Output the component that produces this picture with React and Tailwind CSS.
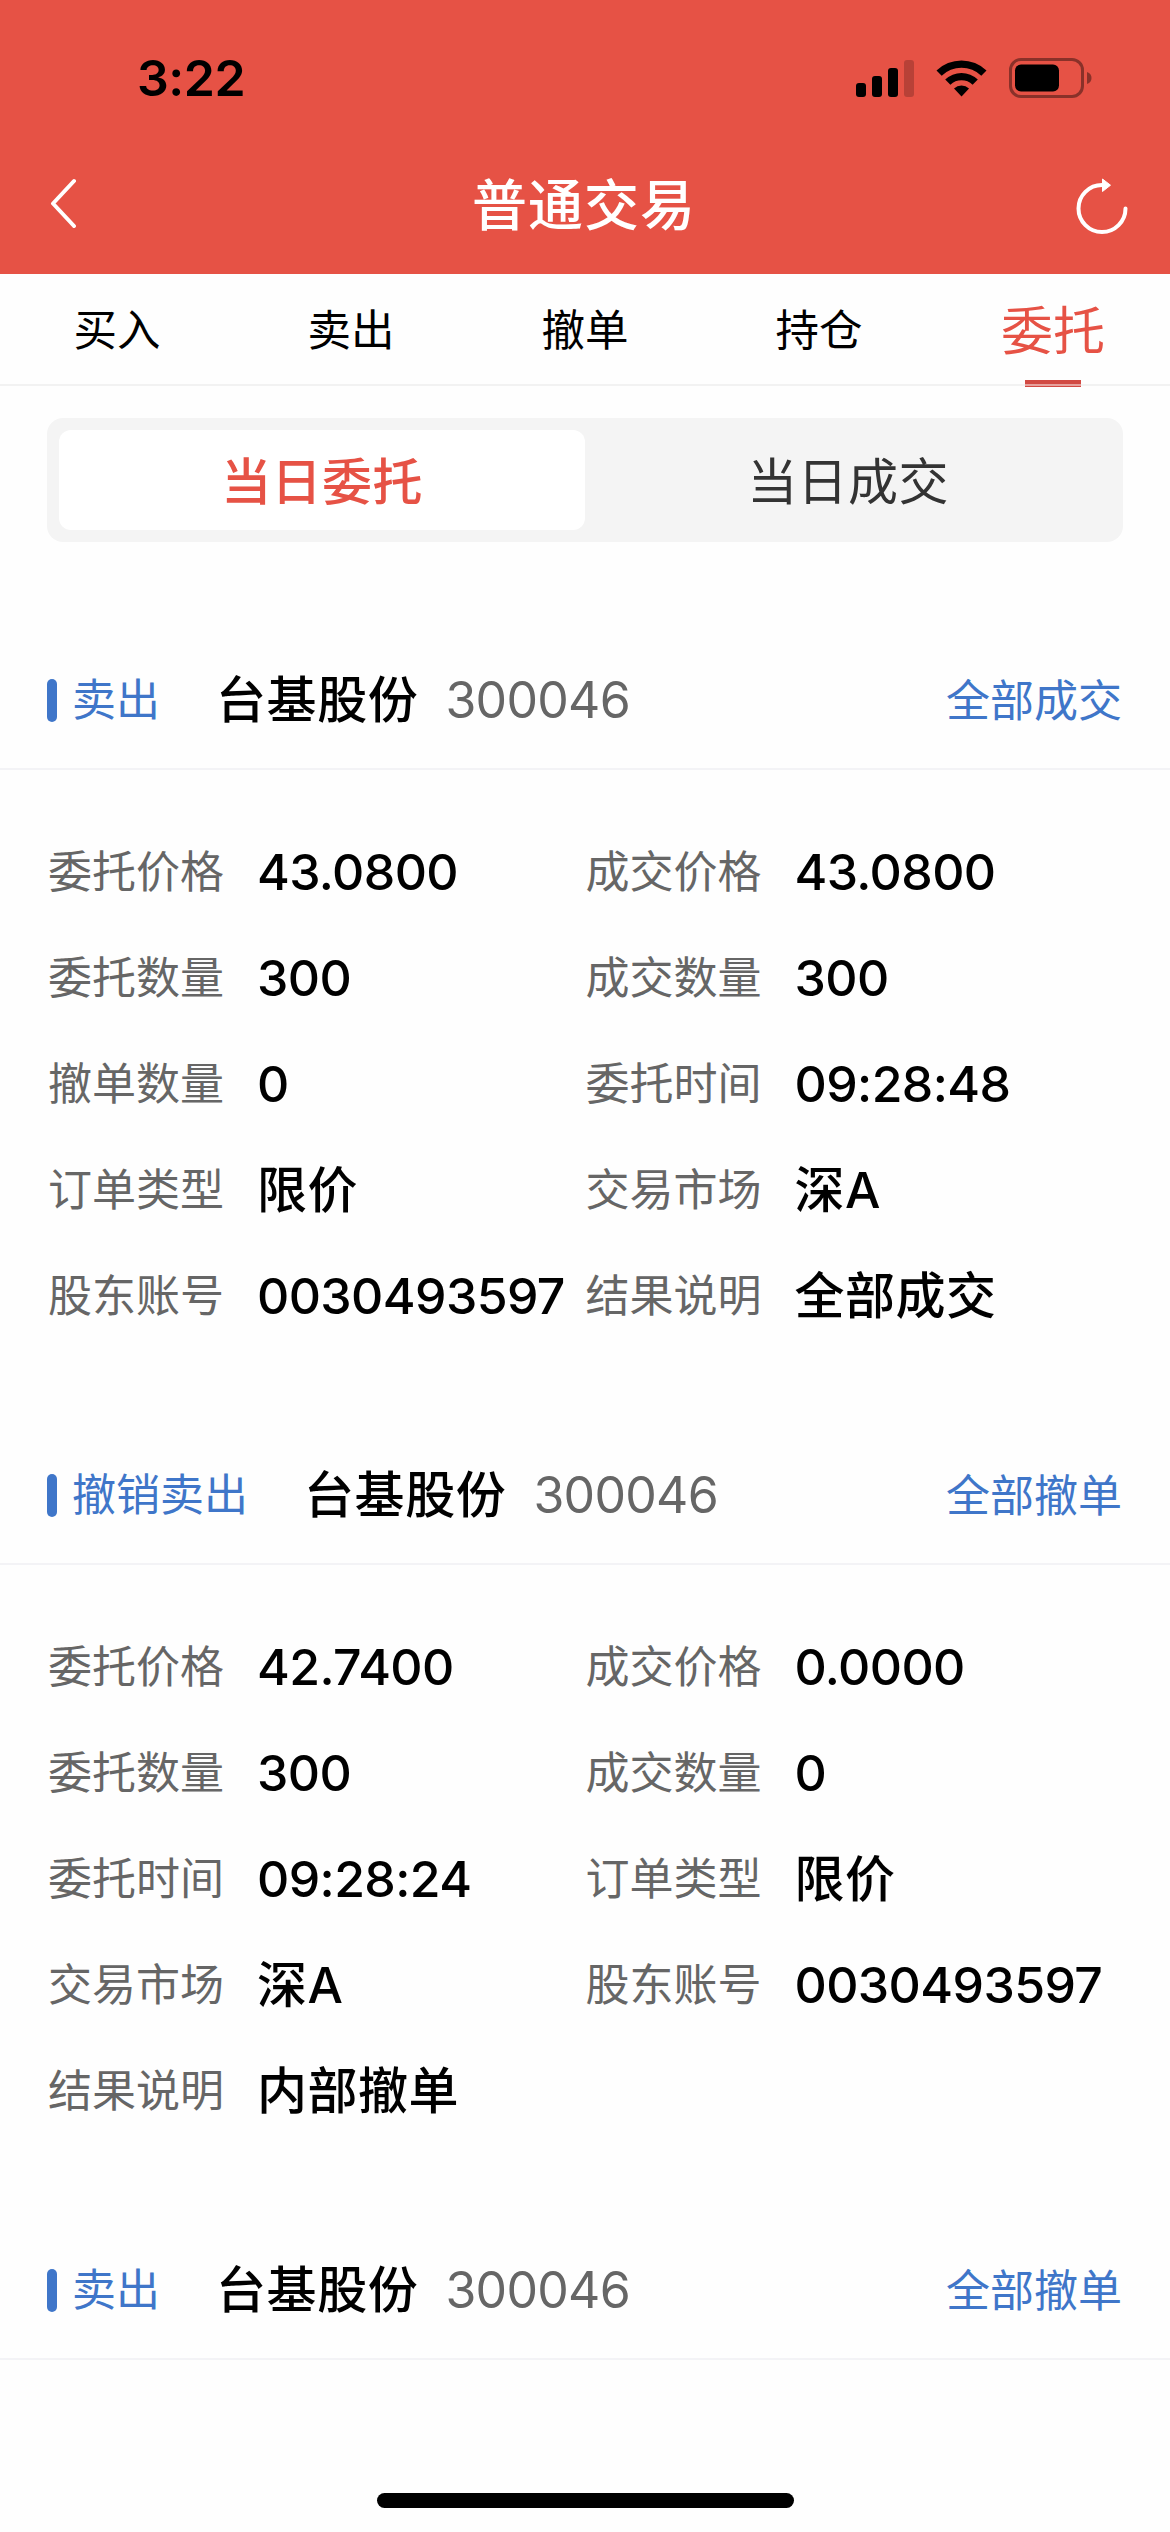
import React from 'react';

const tabs = ['买入', '卖出', '撤单', '持仓', '委托'];

const orders = [
  {
    side: '卖出',
    name: '台基股份',
    code: '300046',
    status: '全部成交',
    fields: [
      ['委托价格', '43.0800'],
      ['成交价格', '43.0800'],
      ['委托数量', '300'],
      ['成交数量', '300'],
      ['撤单数量', '0'],
      ['委托时间', '09:28:48'],
      ['订单类型', '限价'],
      ['交易市场', '深A'],
      ['股东账号', '0030493597'],
      ['结果说明', '全部成交'],
    ],
  },
  {
    side: '撤销卖出',
    name: '台基股份',
    code: '300046',
    status: '全部撤单',
    fields: [
      ['委托价格', '42.7400'],
      ['成交价格', '0.0000'],
      ['委托数量', '300'],
      ['成交数量', '0'],
      ['委托时间', '09:28:24'],
      ['订单类型', '限价'],
      ['交易市场', '深A'],
      ['股东账号', '0030493597'],
      ['结果说明', '内部撤单'],
    ],
  },
  {
    side: '卖出',
    name: '台基股份',
    code: '300046',
    status: '全部撤单',
    fields: [],
  },
];

function StatusBar() {
  return (
    <div className="flex h-[156px] items-center justify-between pl-[137px] pr-[78px]">
      <span className="text-[50px] font-semibold leading-none tracking-[-0.5px] text-black">3:22</span>
      <div className="flex items-center">
        <svg className="mr-[22px] h-[38px] w-[58px]" viewBox="0 0 58 38">
          <rect x="0" y="24" width="10" height="14" rx="3" />
          <rect x="16" y="17" width="10" height="21" rx="3" />
          <rect x="32" y="9" width="10" height="29" rx="3" />
          <rect x="48" y="1" width="10" height="37" rx="3" opacity="0.2" />
        </svg>
        <svg className="mr-[22px] h-[38px] w-[51px]" viewBox="0 0 51 38">
          <path d="M0.5 11.5a36 36 0 0 1 50 0l-5.200 5.300a28.500 28.500 0 0 0-39.600 0z" />
          <path d="M9.200 20.500a23.500 23.500 0 0 1 32.600 0l-5.200 5.200a16.200 16.200 0 0 0-22.200 0z" />
          <path d="M18 29.500a11 11 0 0 1 15 0l-7.500 8z" />
        </svg>
        <svg className="h-10 w-[83px]" viewBox="0 0 83 40">
          <rect x="1.500" y="1.500" width="72" height="37" rx="10.500" fill="none" stroke="#000" strokeWidth="3" opacity="0.4" />
          <rect x="6" y="6.500" width="44" height="27" rx="6" />
          <path d="M78 14q4.500 1.500 4.500 6t-4.500 6z" opacity="0.4" />
        </svg>
      </div>
    </div>
  );
}

function NavBar() {
  return (
    <div className="flex h-[118px] items-center justify-between pb-6 pl-[49px] pr-[41px]">
      <svg className="h-[50px] w-[46px]" viewBox="0 0 46 50" fill="none" stroke="#fff" strokeWidth="4" strokeLinecap="round" strokeLinejoin="round">
        <path d="M25 3 4 25.500 25 48" />
      </svg>
      <h1 className="mt-1 text-[55px] font-medium leading-none tracking-[1px] text-white">普通交易</h1>
      <svg className="mt-[5px] h-[60px] w-[56px]" viewBox="0 0 56 60" fill="none">
        <path d="M52.500 32.500a23.500 23.500 0 1 1-23.500-23.500h4" stroke="#fff" strokeWidth="4" strokeLinecap="round" />
        <path d="M29.500 3 37.500 9.200 29.500 15.500z" fill="#fff" stroke="#fff" strokeLinejoin="round" />
      </svg>
    </div>
  );
}

function Tabs() {
  return (
    <div className="flex h-28 border-b-2 border-[#f2f2f2]">
      {tabs.map((tab, i) =>
        i === 4 ? (
          <div key={tab} className="relative flex flex-1 items-center justify-center pt-[5px] text-[52px] leading-none text-[#e65245]">
            {tab}
            <span className="absolute -bottom-[3px] left-[89px] h-[7px] w-14 bg-[#d24a43]" />
            <span className="absolute -bottom-[2px] left-[89px] h-[2px] w-14 bg-[#e7a19d]" />
          </div>
        ) : (
          <div key={tab} className="flex flex-1 items-center justify-center pt-1 text-[43.5px] leading-none text-black">
            {tab}
          </div>
        )
      )}
    </div>
  );
}

function Value({ text }) {
  // digits run slightly tighter than Chinese text
  const numeric = /^[\d.:]+$/.test(text);
  return (
    <span className={`text-[50px] font-medium leading-none text-black ${numeric ? 'tracking-[-0.6px]' : 'tracking-[0.5px]'}`}>
      {text}
    </span>
  );
}

function OrderCard({ order }) {
  return (
    <div>
      <div className="flex h-[138px] items-center border-b-2 border-[#f3f3f6] pl-[47px] pr-12">
        <span className="h-[43px] w-[10px] rounded-full bg-[#3f76c9]" />
        <span className="ml-[15px] text-[44px] leading-none text-[#3f76c9]">{order.side}</span>
        <span className="ml-[56px] text-[50px] font-medium leading-none tracking-[0.6px] text-black">{order.name}</span>
        <span className="ml-[27px] text-[50px] leading-none tracking-[-0.7px] text-[#666]">{order.code}</span>
        <span className="ml-auto mt-[2px] text-[44px] leading-none text-[#3f76c9]">{order.status}</span>
      </div>
      <div className="grid grid-cols-2 pb-[78px] pl-12 pr-[47px] pt-[49px]">
        {order.fields.map(([label, value]) => (
          <div key={label} className="flex h-[106px] items-center whitespace-nowrap">
            <span className="w-[209px] shrink-0 text-[44px] leading-none text-[#666]">{label}</span>
            <Value text={value} />
          </div>
        ))}
      </div>
    </div>
  );
}

export default function App() {
  return (
    <div className="relative h-[2532px] w-[1170px] overflow-hidden bg-[#fefefe] font-['Inter','Noto_Sans_CJK_SC',sans-serif]">
      <header className="bg-[#e65245]">
        <StatusBar />
        <NavBar />
      </header>
      <Tabs />
      <div className="mx-[47px] mt-8 flex h-[124px] rounded-2xl bg-[#f4f4f4] p-3">
        <div className="flex flex-1 items-center justify-center rounded-xl bg-white pt-[3px] text-[50px] font-medium leading-none tracking-[0.4px] text-[#e65245]">
          当日委托
        </div>
        <div className="flex flex-1 items-center justify-center pt-[3px] text-[50px] leading-none tracking-[0.4px] text-[#333]">当日成交</div>
      </div>
      <div className="mt-[90px]">
        {orders.map((order, i) => (
          <OrderCard key={i} order={order} />
        ))}
      </div>
      <div className="absolute bottom-6 left-[377px] h-[15px] w-[417px] rounded-full bg-black" />
    </div>
  );
}
